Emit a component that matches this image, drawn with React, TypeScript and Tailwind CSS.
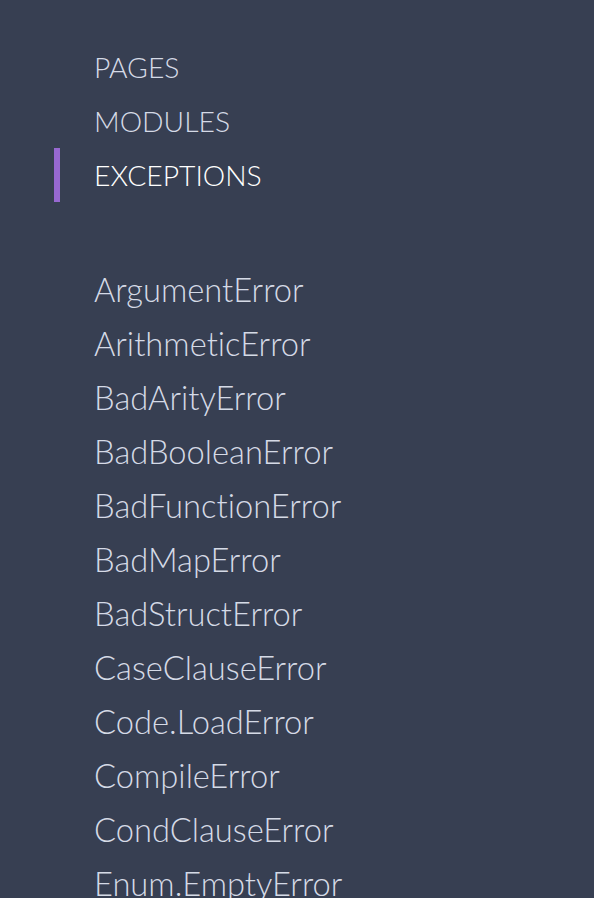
export default function App() {
  const tabs = ["PAGES", "MODULES", "EXCEPTIONS"];
  const items = [
    "ArgumentError",
    "ArithmeticError",
    "BadArityError",
    "BadBooleanError",
    "BadFunctionError",
    "BadMapError",
    "BadStructError",
    "CaseClauseError",
    "Code.LoadError",
    "CompileError",
    "CondClauseError",
    "Enum.EmptyError",
  ];
  return (
    <div
      className="w-[594px] h-[898px] overflow-hidden bg-[#373f52] font-light"
      style={{ fontFamily: "Lato, 'Open Sans', sans-serif", fontVariantLigatures: "none" }}
    >
      <div className="pt-[40px] flex flex-col">
        {tabs.map((t) => {
          const active = t === "EXCEPTIONS";
          return (
            <div key={t} className="flex h-[54px] items-center">
              <div className={`w-[6px] h-full ml-[54px] ${active ? "bg-[#9768d1]" : ""}`} />
              <span className={`ml-[34px] text-[28.3px] leading-none ${active ? "text-white" : "text-[#d5dae6]"}`}>{t}</span>
            </div>
          );
        })}
      </div>
      <div className="mt-[61px] flex flex-col pl-[94px]">
        {items.map((t) => (
          <div key={t} className="h-[54px] flex items-center text-[32.7px] leading-none text-[#d5dae6] whitespace-nowrap">
            {t}
          </div>
        ))}
      </div>
    </div>
  );
}
